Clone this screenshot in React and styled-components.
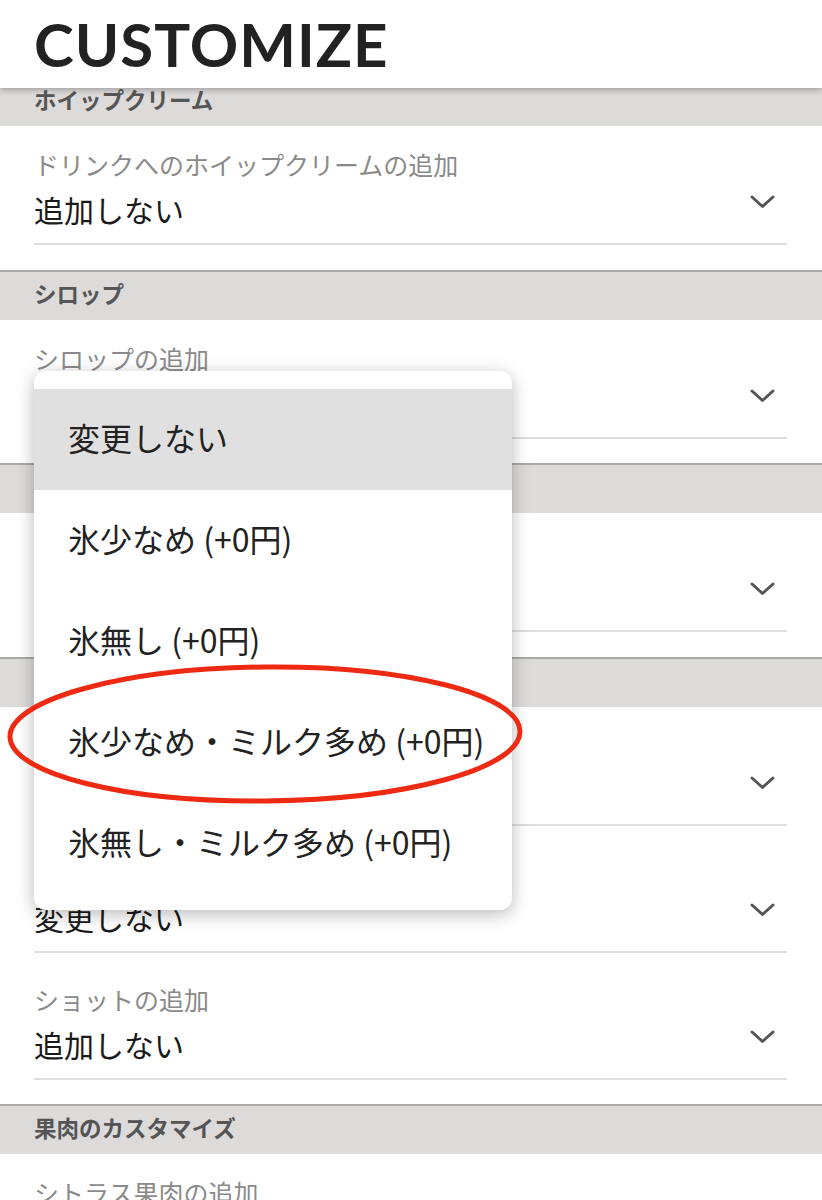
import React from "react";
import styled, { createGlobalStyle } from "styled-components";

const sections = [
  {
    title: "ホイップクリーム",
    items: [{ label: "ドリンクへのホイップクリームの追加", value: "追加しない" }],
  },
  {
    title: "シロップ",
    items: [{ label: "シロップの追加", value: "追加しない" }],
  },
  {
    title: "ソース",
    items: [{ label: "ソースの追加", value: "追加しない" }],
  },
  {
    title: "ミルク・氷",
    items: [
      { label: "ミルクの変更", value: "変更しない" },
      { label: "氷・ミルクの量", value: "変更しない" },
      { label: "ショットの追加", value: "追加しない" },
    ],
  },
  {
    title: "果肉のカスタマイズ",
    items: [{ label: "シトラス果肉の追加", value: "追加しない" }],
  },
];

const options = [
  "変更しない",
  "氷少なめ (+0円)",
  "氷無し (+0円)",
  "氷少なめ・ミルク多め (+0円)",
  "氷無し・ミルク多め (+0円)",
];

const Chevron = () => (
  <ChevronIcon width="25" height="14" viewBox="0 0 25 14">
    <path
      d="M2 2 L12.5 11.5 L23 2"
      fill="none"
      stroke="#555"
      strokeWidth="3"
      strokeLinecap="round"
      strokeLinejoin="round"
    />
  </ChevronIcon>
);

export default function App() {
  return (
    <>
      <GlobalStyle />
      <Page>
        <Header>
          <Title>CUSTOMIZE</Title>
        </Header>

        <Content>
          {sections.map((section) => (
            <Section key={section.title}>
              <SectionTitle>{section.title}</SectionTitle>
              <Items>
                {section.items.map((item) => (
                  <Item key={item.label}>
                    <Label>{item.label}</Label>
                    <ValueRow>
                      <Value>{item.value}</Value>
                      <Chevron />
                    </ValueRow>
                  </Item>
                ))}
              </Items>
            </Section>
          ))}
        </Content>

        {/* open select menu */}
        <Menu>
          {options.map((option, i) => (
            <Option key={option} selected={i === 0}>
              {option}
            </Option>
          ))}
        </Menu>

        {/* red hand-drawn circle around the option */}
        <Mark width="522" height="146" viewBox="0 0 522 146">
          <ellipse
            cx="261"
            cy="73"
            rx="255"
            ry="67"
            fill="none"
            stroke="#ee2b12"
            strokeWidth="5"
          />
        </Mark>
      </Page>
    </>
  );
}

const GlobalStyle = createGlobalStyle`
  html, body {
    margin: 0;
    padding: 0;
    background: #fff;
  }
  body {
    font-family: "Noto Sans CJK JP", "Noto Sans", sans-serif;
    overflow: hidden;
  }
`;

const Page = styled.div`
  position: relative;
  width: 822px;
  height: 1200px;
  overflow: hidden;
  background: #fff;
`;

const Header = styled.header`
  position: relative;
  z-index: 2;
  height: 88px;
  box-sizing: border-box;
  padding: 14px 0 0 34px;
  background: #fff;
  box-shadow: 0 2px 6px rgba(0, 0, 0, 0.28);
`;

const Title = styled.h1`
  margin: 0;
  font-family: Lato, "Open Sans", sans-serif;
  font-weight: 700;
  font-size: 60px;
  line-height: 60px;
  color: #222;
  letter-spacing: 1px;
`;

const Content = styled.main`
  margin-top: -12px;
`;

const Section = styled.section`
  padding-bottom: 24.5px;
`;

const SectionTitle = styled.div`
  height: 42px;
  padding: 0 34px 6px;
  border-top: 2px solid #a9a9a9;
  background: #dcdbda;
  font-size: 22.5px;
  font-weight: 700;
  line-height: 42px;
  color: #555;
`;

const Items = styled.div`
  display: flex;
  flex-direction: column;
  padding: 0 35px 0 34px;
`;

const Item = styled.div`
  padding: 23px 0 16px;
  border-bottom: 2px solid #dedede;

  & + & {
    margin-top: 8px;
  }
`;

const Label = styled.div`
  font-size: 25px;
  line-height: 30px;
  color: #8a8a8a;
`;

const ValueRow = styled.div`
  display: flex;
  justify-content: space-between;
  align-items: flex-start;
  margin-top: 12px;
`;

const Value = styled.div`
  font-size: 30px;
  line-height: 36px;
  color: #1a1a1a;
`;

const ChevronIcon = styled.svg`
  flex: none;
  margin: 4px 12px 0 0;
`;

const Menu = styled.ul`
  position: absolute;
  z-index: 3;
  top: 371px;
  left: 34px;
  width: 478px;
  margin: 0;
  padding: 18px 0 16px;
  list-style: none;
  background: #fff;
  border-radius: 12px;
  box-shadow: 0 4px 18px rgba(0, 0, 0, 0.28);
`;

const Option = styled.li`
  height: 101px;
  box-sizing: border-box;
  padding: 0 0 6px 34px;
  display: flex;
  align-items: center;
  font-size: 32px;
  color: #222;
  background: ${(props) => (props.selected ? "#e0e0e0" : "transparent")};
`;

const Mark = styled.svg`
  position: absolute;
  z-index: 4;
  top: 661px;
  left: 4px;
  transform: rotate(-0.6deg);
`;
